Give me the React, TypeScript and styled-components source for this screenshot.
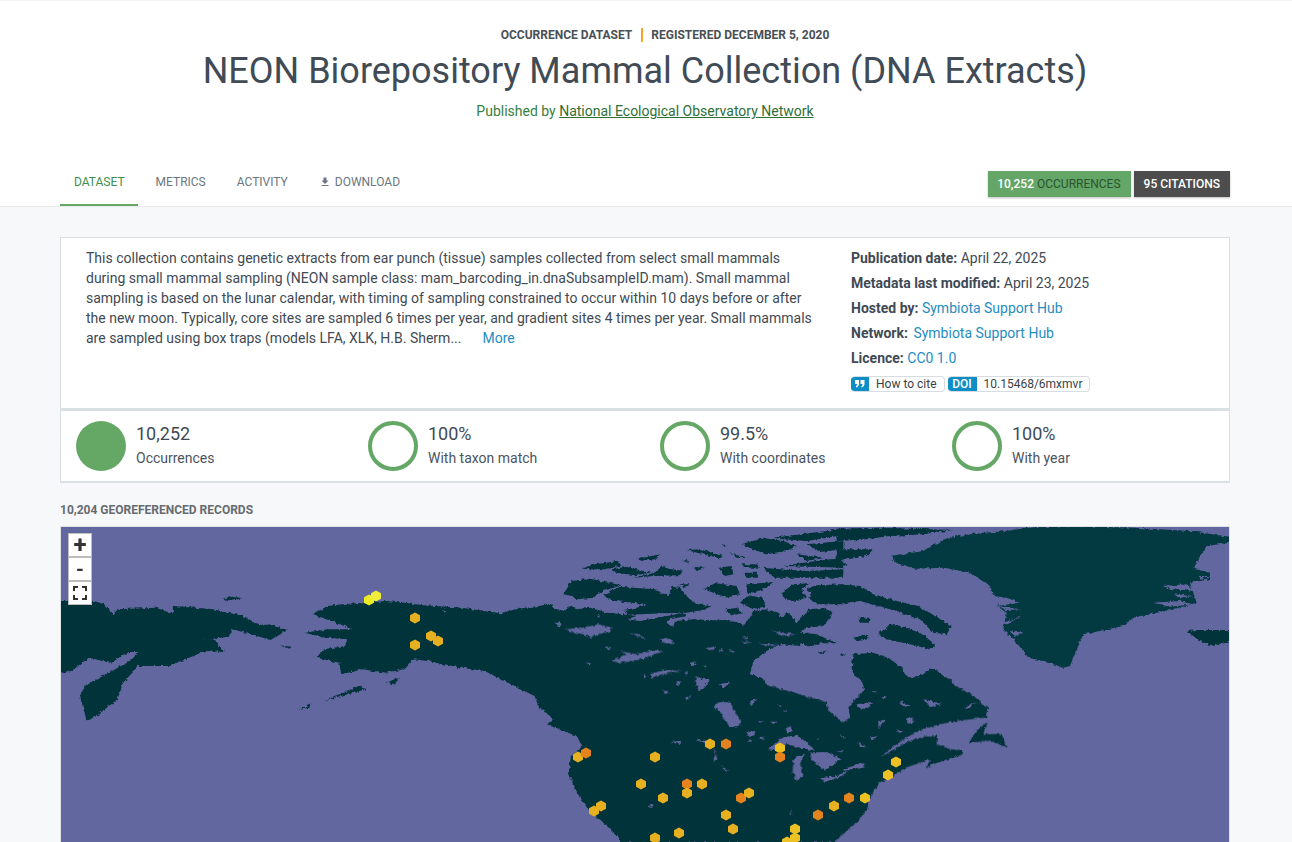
import React from 'react';
import styled, { createGlobalStyle } from 'styled-components';

const Global = createGlobalStyle`
  html, body { margin: 0; padding: 0; height: 842px; overflow: hidden; background: #f7f8fa; }
  body { font-family: Roboto, "Liberation Sans", sans-serif; color: #3f4a54; }
  * { box-sizing: border-box; }
`;

const Page = styled.div`height: 842px; overflow: hidden;`;
const Header = styled.header`
  height: 207px; background: #fff; border-top: 1px solid #f3f4f5; border-bottom: 1px solid #e8eaec;
  display: flex; flex-direction: column; padding: 0 62px 0 60px;
`;
const Eyebrow = styled.div`
  margin-top: 27px; height: 14px; display: flex; justify-content: center; align-items: center; padding-left: 40px;
  font-size: 12px; line-height: 14px; font-weight: 700; color: #4a4f55; text-transform: uppercase;
`;
const Divider = styled.span`width: 2px; height: 14px; background: #f5a623; margin: 0 8px 0 9px;`;
const Title = styled.h1`
  margin: 5px 0 0 0; font-size: 36px; line-height: 48px; font-weight: 400; text-align: center; color: #414b55;
`;
const Publisher = styled.div`
  margin: 6px 0 0 0; font-size: 14px; line-height: 20px; text-align: center; color: #37803f;
  a { color: #2f6f37; text-decoration: underline; }
`;
const TabBar = styled.nav`
  margin-top: 39px; height: 46px; display: flex; justify-content: space-between; align-items: flex-start;
`;
const Tabs = styled.div`display: flex; gap: 3px;`;
const Tab = styled.a<{ $active?: boolean }>`
  height: 46px; padding: 14px ${p => (p.$active ? '13px' : '14px')} 0 14px; margin-right: ${p => (p.$active ? '1px' : '0')};
  font-size: 12px; line-height: 16px; text-transform: uppercase;
  color: ${p => (p.$active ? '#3f8f48' : '#6b7680')};
  border-bottom: 2px solid ${p => (p.$active ? '#65a866' : 'transparent')};
  display: flex; align-items: flex-start; svg { margin: 2px 4px 0 0; }
`;
const Counts = styled.div`display: flex; gap: 3px; margin-top: 11px;`;
const Count = styled.a<{ $green?: boolean }>`
  height: 26px; padding: 0 10px 0 ${p => (p.$green ? '9px' : '10px')}; display: flex; align-items: center; gap: 3px;
  font-size: 12px; font-weight: 500; color: #fff; text-transform: uppercase;
  background: ${p => (p.$green ? '#63a667' : '#4d4d4d')};
  box-shadow: 0 1px 2px rgba(0,0,0,.25);
`;
const Dim = styled.span`color: #2b5530; font-weight: 400;`;
const Main = styled.main`width: 1170px; margin: 30px 0 0 60px;`;
const Card = styled.section`
  height: 171px; background: #fff; border: 1px solid #d9e0e4; border-bottom: none;
  display: grid; grid-template-columns: 765px 1fr; padding: 10px 0 0 25px;
`;
const Description = styled.p`
  margin: 0; width: 730px; font-size: 14px; line-height: 20px; color: #3f4a54;
`;
const More = styled.a`color: #1f8dc1; margin-left: 21px;`;
const Meta = styled.div`display: flex; flex-direction: column; font-size: 14px; line-height: 25px; margin-top: -2px;`;
const MetaRow = styled.div`
  height: 25px; color: #3f4a54; white-space: nowrap;
  b { font-weight: 700; }
  a { color: #1f8dc1; }
`;
const NetworkLink = styled.a`margin-left: 2px;`;
const Pills = styled.div`display: flex; gap: 3px; margin-top: 5px;`;
const Pill = styled.a`
  height: 16px; display: flex; border: 1px solid #d5dde3; border-left: none; border-radius: 4px;
  font-size: 12px; line-height: 14px; color: #3a3f45; background: #fff; overflow: hidden;
`;
const PillHead = styled.span<{ $w: number }>`
  width: ${p => p.$w}px; margin: -1px 0; background: #0d8fc5; color: #fff; font-weight: 500; font-size: 12px;
  line-height: 16px; display: flex; align-items: center; justify-content: center;
`;
const PillText = styled.span`padding: 0 7px;`;
const Stats = styled.section`
  height: 75px; background: #fff; border: 1px solid #d9e0e4; border-top-width: 3px; border-bottom-width: 2px;
  display: grid; grid-template-columns: repeat(4, 292px); padding: 10px 0 0 15px;
`;
const Stat = styled.div`display: flex; gap: 10px; align-items: flex-start;`;
const StatText = styled.div`display: flex; flex-direction: column; margin-top: 1px;`;
const StatValue = styled.span`font-size: 18px; line-height: 24px; color: #3f4a54;`;
const StatLabel = styled.span`font-size: 14px; line-height: 20px; margin-top: 2px; color: #4a545d;`;
const SectionTitle = styled.h3`
  margin: 19px 0 0; height: 18px; font-size: 12px; line-height: 16px; font-weight: 700; color: #666b70; text-transform: uppercase;
`;
const MapBox = styled.div`
  position: relative; margin-top: 6px; height: 330px; border: 1px solid #dfe3e6; background: #63679f; overflow: hidden;
`;
const MapSvg = styled.svg`display: block; position: absolute; left: 0; top: 0;`;
const Controls = styled.div`position: absolute; left: 7px; top: 6px; display: flex; flex-direction: column;`;
const Control = styled.button<{ $big?: boolean }>`
  width: 24px; height: 24px; padding: 0; background: #fff; border: 1px solid #bdbdbd; color: #333;
  font: 700 ${p => (p.$big ? 24 : 20)}px/20px Roboto, sans-serif; display: flex; align-items: center; justify-content: center;
`;

const Ring = ({ pct, solid }: { pct: number; solid?: boolean }) => {
  const c = 2 * Math.PI * 23;
  return (
    <svg width="50" height="50" viewBox="0 0 50 50" style={{ flex: 'none' }}>
      {solid ? (
        <circle cx="25" cy="25" r="25" fill="#65a866" />
      ) : (
        <>
          <circle cx="25" cy="25" r="23" fill="none" stroke="#eef3ee" strokeWidth="4" />
          <circle cx="25" cy="25" r="23" fill="none" stroke="#65a866" strokeWidth="4"
            strokeDasharray={`${(c * pct) / 100} ${c}`} transform="rotate(-90 25 25)" />
        </>
      )}
    </svg>
  );
};

const LAND = '#01333a';
const WATER = '#63679f';

// Coastlines traced per crop: each layer has its own origin and scale.
const westLand = [
  '0,225 90,225 115,235 140,265 150,250 250,245 295,262 295,240 400,250 480,270 525,300 545,295 595,312 550,342 500,325 450,310 440,332 350,345 400,338 430,378 380,375 285,420 205,420 165,470 150,520 95,570 70,585 52,510 65,480 175,410 205,378 180,378 130,410 75,395 30,435 0,440',
  '660,265 700,240 760,232 800,232 850,225 900,230 950,238 1050,245 1150,262 1190,250 1280,235 1300,300 1600,300 1600,945 1470,945 1420,890 1380,850 1345,790 1330,740 1335,690 1365,660 1350,630 1270,595 1290,580 1250,540 1240,510 1170,470 1110,435 1050,425 960,405 925,400 900,430 850,440 790,430 735,445 730,410 670,395 690,370 745,360 750,340 690,335 640,320 700,310 765,310 720,290',
  '422,218 450,212 478,217 450,224',
  '850,470 885,455 875,475',
  '690,525 780,480 800,490 735,510',
  '622,552 655,535 650,545',
  '575,358 605,362 600,368',
];
const westWater = [
  '1195,535 1215,545 1212,560',
  '1000,250 1012,255 1005,260',
];
const arcticLand = [
  '0,245 25,232 50,250 75,255 85,240 110,250 150,245 200,260 250,265 290,270 260,280 300,285 380,270 430,260 440,270 390,280 380,290 400,305 405,285 460,280 520,283 560,282 600,290 610,300 625,280 640,255 680,250 715,262 725,275 740,258 755,270 770,290 790,270 810,250 850,245 880,262 850,300 800,305 780,320 810,320 790,345 780,360 720,355 680,375 640,405 630,445 660,455 675,480 0,480',
  '190,205 240,182 340,190 385,210 395,182 420,185 445,215 470,235 515,240 490,252 440,260 370,262 265,266 250,252 290,245 320,235 225,225 200,215',
  '70,205 95,165 150,158 245,178 190,195 160,215 110,220 95,210',
  '125,128 165,115 235,105 240,120 195,130 150,130',
  '215,130 260,122 330,140 285,148 230,140',
  '280,155 350,138 365,118 385,128 435,135 415,148 340,150',
  '295,98 360,85 345,100 300,105',
  '440,72 480,70 550,90 540,97 490,85',
  '570,82 620,95 600,97',
  '605,55 670,35 730,45 770,60 740,75 680,85 640,70',
  '700,35 860,15 910,8 910,27 800,45 730,40',
  '800,55 910,45 910,70 840,78',
  '770,85 850,95 800,105',
  '870,100 910,98 910,125 730,120 790,110',
  '670,125 720,130 800,135 910,130 910,155 800,155 700,155',
  '600,115 650,115 660,125 620,125',
  '610,140 650,140 655,155 620,155',
  '535,125 575,120 580,145 555,150',
  '460,122 495,125 470,135',
  '620,175 700,168 670,190 625,205',
  '490,190 525,172 590,180 600,205 560,215 520,200',
  '600,230 625,208 665,215 680,240 640,250',
  '725,200 760,175 810,172 785,190 800,215 760,225 735,220',
  '800,190 830,178 910,175 910,235 830,235 805,215 815,200',
  '560,250 590,245 610,262 570,268',
  '415,175 450,175 435,185',
  '785,350 795,320 830,325 890,352 840,352 805,365',
  '835,380 865,372 845,385',
  '545,55 560,58 550,62',
  '430,100 450,108 440,110',
];
const arcticWater = [
  '45,290 60,285 65,295 55,302',
  '75,310 130,305 175,295 215,305 210,320 190,320 150,335 130,325 100,318',
  '270,322 300,325 320,340 295,332',
  '360,340 385,338 405,352 375,352',
  '195,360 215,365 205,370',
  '215,405 260,385 240,375 290,385 340,372 370,375 320,395 280,405 240,410',
  '140,410 150,412 145,420',
  '330,445 370,432 425,435 365,445 335,455',
  '310,445 320,450 312,458',
  '495,368 525,360 520,375',
  '545,365 552,375 540,375',
  '565,372 585,375 580,380',
  '450,410 470,405 460,420',
  '490,415 500,420 495,425',
  '430,440 445,435 440,445',
  '465,450 485,458 475,465',
  '490,460 505,470 495,480 485,470',
  '405,470 425,465 420,475',
  '605,335 625,335 620,340',
  '605,345 640,350 610,352',
  '655,350 720,358 680,360',
  '695,315 770,325 730,330',
  '175,262 180,272 172,275',
];
const greenland = [
  '150,90 250,75 280,55 350,30 430,20 500,15 560,5 700,0 880,5 1050,15 1168,32 1168,50 1100,60 1075,100 1060,125 1110,140 1110,160 1050,170 1070,230 1000,250 880,275 850,300 780,315 730,325 690,420 670,425 610,405 565,395 530,350 490,310 500,260 470,240 540,230 500,215 460,210 450,180 390,140 310,125 230,128 170,112',
];
const easternLand = [
  '-10,175 60,180 100,205 170,225 235,240 335,300 320,325 280,320 240,280 150,250 60,225 -10,235',
  '115,325 150,295 180,300 240,320 285,355 270,370 210,355 140,340',
  '40,335 80,325 85,340 50,345',
  '55,275 90,275 85,290 60,290',
  '0,385 15,385 5,392',
  '-10,8 120,5 340,12 250,25 150,30 60,42 -10,45',
  '-10,70 100,70 80,90 -10,100',
  '-10,115 20,115 5,125',
  '1040,315 1075,312 1168,312 1168,345 1120,360 1080,345',
  '40,385 100,380 145,395 185,425 195,445 215,460 240,450 280,425 310,450 340,480 345,520 80,520 72,490 66,465 45,450 35,430',
];
const greenlandWater = [
  '965,180 1040,175 1065,195 1000,190',
  '940,230 1020,225 1060,235 990,242',
  '1060,130 1115,128 1100,135',
  '1075,150 1110,150 1085,158',
  '470,240 545,250 500,252',
  '490,290 545,270 500,295',
  '510,315 550,320 525,330',
  '1000,205 1060,210 1020,215',
];
const southLand = [
  '-60,-5 365,-5 380,18 460,40 560,70 565,95 610,130 630,115 625,85 672,30 700,-5 925,-5 945,20 1000,50 1045,90 1040,115 960,125 900,135 850,150 800,175 750,210 720,235 800,190 860,170 890,170 890,195 930,210 965,215 970,225 880,255 860,265 870,240 800,265 760,290 715,315 695,345 680,395 650,430 610,465 580,490 -60,490',
  '985,190 1010,155 1040,130 1030,165 1085,165 1100,205 1050,185 1000,190',
];
const southWater = [
  '385,210 430,175 470,168 500,190 525,215 475,205 440,195 410,215',
  '460,240 495,222 480,255 490,290 470,305 458,280',
  '510,220 560,220 605,240 580,255 555,275 530,255 515,240',
  '540,298 590,290 625,275 600,295 555,308',
  '610,270 670,252 675,262 615,275',
  '220,85 235,70 270,70 300,125 300,140 270,145 245,110 240,95',
  '70,30 85,40 75,48',
  '105,12 125,8 115,18',
  '165,0 210,0 195,25 175,35',
  '240,15 270,10 250,28',
  '135,55 155,52 140,62',
  '330,65 350,60 335,80',
  '355,125 370,128 360,132',
  '390,128 412,128 400,134',
  '415,78 430,82 420,84',
  '430,95 440,98 432,100',
  '320,160 345,155 345,170 325,170',
  '435,150 450,142 458,155 445,162',
  '355,170 375,178 360,180',
  '325,185 340,183 330,190',
  '90,190 120,185 120,195',
  '165,182 195,185 215,205 232,240 220,250 225,215 200,195',
  '245,260 265,275 250,272',
  '25,380 45,370 35,388',
  '450,390 458,410 452,405',
  '530,180 540,178 535,184',
  '600,168 620,175 605,175',
  '590,215 615,218 600,220',
  '650,75 700,72 675,90 660,88',
  '650,190 680,205 665,205',
  '715,125 735,122 715,148',
  '690,175 710,172 700,182',
  '770,155 790,155 780,162',
  '800,120 818,115 818,130 805,135',
  '850,60 905,75 870,85',
  '780,65 810,80 790,85',
  '970,85 1010,70 980,90',
  '695,35 715,40 700,40',
  '725,55 745,52 730,60',
  '900,155 960,165 920,165',
];

type Hex = [number, number, string];
const Y = '#e6b021', O = '#e5841f', L = '#ecec26', G = '#edc023';
const hexes: Hex[] = [
  [369, 601, L], [376, 597, '#eeee3a'], [415, 619, Y], [431, 637, Y], [438, 642, Y], [415, 646, Y],
  [578, 758, Y], [586, 754, O], [655, 758, Y], [641, 785, Y], [594, 812, Y], [601, 807, Y], [655, 839, Y],
  [710, 745, Y], [726, 745, O], [780, 749, G], [780, 758, O], [687, 785, O], [702, 785, Y], [687, 794, Y],
  [663, 799, Y], [741, 799, O], [749, 794, Y], [896, 763, G], [888, 776, G], [849, 799, O], [865, 799, G],
  [834, 807, Y], [818, 816, O], [726, 816, Y], [733, 830, Y], [795, 830, G], [795, 839, G], [787, 843, G], [679, 834, Y],
];
const hexPoints = (x: number, y: number) =>
  [[0, -5.6], [5, -2.8], [5, 2.8], [0, 5.6], [-5, 2.8], [-5, -2.8]].map(([a, b]) => `${x + a},${y + b}`).join(' ');

const Polys = ({ items, fill }: { items: string[]; fill: string }) => (
  <>{items.map(p => <polygon key={p} points={p} fill={fill} />)}</>
);

const WorldMap = () => (
  <MapSvg width="1168" height="330" viewBox="61 528 1168 330">
    <defs>
      <filter id="coast" filterUnits="userSpaceOnUse" x="0" y="500" width="1300" height="400" colorInterpolationFilters="sRGB">
        <feTurbulence type="fractalNoise" baseFrequency="0.28" numOctaves="3" seed="4" />
        <feDisplacementMap in="SourceGraphic" scale="4" xChannelSelector="R" yChannelSelector="G" />
      </filter>
    </defs>
    <g filter="url(#coast)">
      <g transform="translate(60 527) scale(.3827 .3333)"><Polys items={westLand} fill={LAND} /></g>
      <g transform="translate(540 527) scale(.3333)"><Polys items={arcticLand} fill={LAND} /></g>
      <g transform="translate(840 527) scale(.3333)">
        <Polys items={greenland} fill="#033a41" />
        <Polys items={easternLand} fill={LAND} />
      </g>
      <g transform="translate(640 680) scale(.3333)"><Polys items={southLand} fill={LAND} /></g>
      <g transform="translate(60 527) scale(.3827 .3333)"><Polys items={westWater} fill={WATER} /></g>
      <g transform="translate(540 527) scale(.3333)"><Polys items={arcticWater} fill={WATER} /></g>
      <g transform="translate(840 527) scale(.3333)"><Polys items={greenlandWater} fill={WATER} /></g>
      <g transform="translate(640 680) scale(.3333)"><Polys items={southWater} fill={WATER} /></g>
    </g>
    {hexes.map(([x, y, c]) => <polygon key={`${x}-${y}`} points={hexPoints(x, y)} fill={c} />)}
  </MapSvg>
);

export default function App() {
  return (
    <Page>
      <Global />
      <Header>
        <Eyebrow>Occurrence dataset<Divider />Registered December 5, 2020</Eyebrow>
        <Title>NEON Biorepository Mammal Collection (DNA Extracts)</Title>
        <Publisher>Published by <a>National Ecological Observatory Network</a></Publisher>
        <TabBar>
          <Tabs>
            <Tab $active>Dataset</Tab>
            <Tab>Metrics</Tab>
            <Tab>Activity</Tab>
            <Tab>
              <svg width="12" height="12" viewBox="0 0 24 24" fill="#6b7680"><path d="M19 9h-4V3H9v6H5l7 7 7-7zM5 18v2h14v-2H5z" /></svg>
              Download
            </Tab>
          </Tabs>
          <Counts>
            <Count $green>10,252 <Dim>Occurrences</Dim></Count>
            <Count>95 Citations</Count>
          </Counts>
        </TabBar>
      </Header>
      <Main>
        <Card>
          <Description>
            This collection contains genetic extracts from ear punch (tissue) samples collected from select small mammals during small mammal sampling (NEON sample class: mam_barcoding_in.dnaSubsampleID.mam). Small mammal sampling is based on the lunar calendar, with timing of sampling constrained to occur within 10 days before or after the new moon. Typically, core sites are sampled 6 times per year, and gradient sites 4 times per year. Small mammals are sampled using box traps (models LFA, XLK, H.B. Sherm...<More>More</More>
          </Description>
          <Meta>
            <MetaRow><b>Publication date:</b> April 22, 2025</MetaRow>
            <MetaRow><b>Metadata last modified:</b> April 23, 2025</MetaRow>
            <MetaRow><b>Hosted by:</b> <a>Symbiota Support Hub</a></MetaRow>
            <MetaRow><b>Network:</b> <NetworkLink>Symbiota Support Hub</NetworkLink></MetaRow>
            <MetaRow><b>Licence:</b> <a>CC0 1.0</a></MetaRow>
            <Pills>
              <Pill>
                <PillHead $w={18}>
                  <svg width="10" height="8" viewBox="0 0 10 8" fill="#fff"><path d="M0 0h4v3.500C4 5.500 3 7 1 7.500V6c.8-.4 1-1 1-2H0zM5.500 0h4v3.500c0 2-1 3.500-3 4V6c.8-.4 1-1 1-2h-2z" /></svg>
                </PillHead>
                <PillText>How to cite</PillText>
              </Pill>
              <Pill>
                <PillHead $w={29}>DOI</PillHead>
                <PillText>10.15468/6mxmvr</PillText>
              </Pill>
            </Pills>
          </Meta>
        </Card>
        <Stats>
          <Stat><Ring pct={100} solid /><StatText><StatValue>10,252</StatValue><StatLabel>Occurrences</StatLabel></StatText></Stat>
          <Stat><Ring pct={100} /><StatText><StatValue>100%</StatValue><StatLabel>With taxon match</StatLabel></StatText></Stat>
          <Stat><Ring pct={99.5} /><StatText><StatValue>99.5%</StatValue><StatLabel>With coordinates</StatLabel></StatText></Stat>
          <Stat><Ring pct={100} /><StatText><StatValue>100%</StatValue><StatLabel>With year</StatLabel></StatText></Stat>
        </Stats>
        <SectionTitle>10,204 georeferenced records</SectionTitle>
        <MapBox>
          <WorldMap />
          <Controls>
            <Control $big>+</Control>
            <Control>-</Control>
            <Control>
              <svg width="14" height="14" viewBox="0 0 14 14" fill="none" stroke="#333" strokeWidth="2">
                <path d="M1 5V1h4M9 1h4v4M13 9v4H9M5 13H1V9" />
              </svg>
            </Control>
          </Controls>
        </MapBox>
      </Main>
    </Page>
  );
}
